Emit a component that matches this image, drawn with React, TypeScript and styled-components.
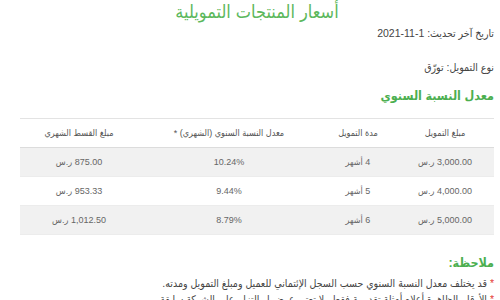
import React from "react";
import styled, { createGlobalStyle } from "styled-components";

const Global = createGlobalStyle`
  html, body { margin: 0; padding: 0; background: #fff; }
  body { font-family: "Liberation Sans", "DejaVu Sans Condensed", "DejaVu Sans", sans-serif; color: #555; overflow: hidden; }
`;

const Page = styled.div`
  direction: rtl;
  width: 474px;
  padding: 0 6px 0 20px;
  height: 300px;
  overflow: hidden;
`;

const Title = styled.h1`
  margin: 0;
  padding-top: 1px;
  text-align: center;
  font-size: 18px;
  line-height: 22px;
  font-weight: normal;
  color: #5cb85c;
`;

const Meta = styled.p<{ $gap: number }>`
  margin: ${(p) => p.$gap}px 0 0;
  font-size: 10.5px;
  line-height: 14px;
  color: #444;
`;

const Ltr = styled.span`
  direction: ltr;
  unicode-bidi: isolate;
`;

const Section = styled.h2<{ $gap: number }>`
  margin: ${(p) => p.$gap}px 0 0;
  font-size: 12.5px;
  line-height: 18px;
  font-weight: bold;
  color: #4caf50;
`;

const Table = styled.table`
  margin-top: 13px;
  width: 474px;
  border-collapse: collapse;
  table-layout: fixed;
  font-size: 9px;
`;

const Th = styled.th<{ $w: number }>`
  width: ${(p) => p.$w}px;
  height: 28px;
  padding: 0;
  font-weight: normal;
  color: #555;
  border-top: 1px solid #e3e3e3;
  border-bottom: 1px solid #dcdcdc;
  text-align: center;
`;

const Tr = styled.tr<{ $shade: boolean }>`
  background: ${(p) => (p.$shade ? "#f1f1f1" : "#fff")};
`;

const Td = styled.td`
  height: 28px;
  padding: 0;
  text-align: center;
  color: #666;
  border-bottom: 1px solid #ececec;
`;

const NoteHead = styled.h3`
  margin: 19px 0 0;
  font-size: 12.5px;
  line-height: 18px;
  font-weight: bold;
  color: #4caf50;
`;

const Note = styled.p<{ $gap: number }>`
  margin: ${(p) => p.$gap}px 0 0;
  font-size: 10.5px;
  line-height: 15px;
  color: #444;
  white-space: nowrap;
`;

const Star = styled.span`
  color: #e53935;
`;

const rows = [
  ["3,000.00 ر.س", "4 أشهر", "10.24%", "875.00 ر.س"],
  ["4,000.00 ر.س", "5 أشهر", "9.44%", "953.33 ر.س"],
  ["5,000.00 ر.س", "6 أشهر", "8.79%", "1,012.50 ر.س"],
];

export default function App() {
  return (
    <>
      <Global />
      <Page>
        <Title>أسعار المنتجات التمويلية</Title>
        <Meta $gap={3}>
          تاريخ آخر تحديث: <Ltr>2021-11-1</Ltr>
        </Meta>
        <Meta $gap={20}>نوع التمويل: تورّق</Meta>
        <Section $gap={13}>معدل النسبة السنوي</Section>
        <Table>
          <thead>
            <tr>
              <Th $w={98}>مبلغ التمويل</Th>
              <Th $w={76}>مدة التمويل</Th>
              <Th $w={182}>معدل النسبة السنوي (الشهري) *</Th>
              <Th $w={118}>مبلغ القسط الشهري</Th>
            </tr>
          </thead>
          <tbody>
            {rows.map((r, i) => (
              <Tr key={i} $shade={i % 2 === 0}>
                {r.map((c, j) => (
                  <Td key={j}>{c}</Td>
                ))}
              </Tr>
            ))}
          </tbody>
        </Table>
        <NoteHead>ملاحظة:</NoteHead>
        <Note $gap={4}>
          <Star>*</Star> قد يختلف معدل النسبة السنوي حسب السجل الإئتماني للعميل ومبلغ التمويل ومدته.
        </Note>
        <Note $gap={1}>
          <Star>*</Star> الأرقام الظاهرة أعلاه أمثلة تقديرية فقط ولا تعتبر عرض او التزام على الشركة سابقة
        </Note>
      </Page>
    </>
  );
}
